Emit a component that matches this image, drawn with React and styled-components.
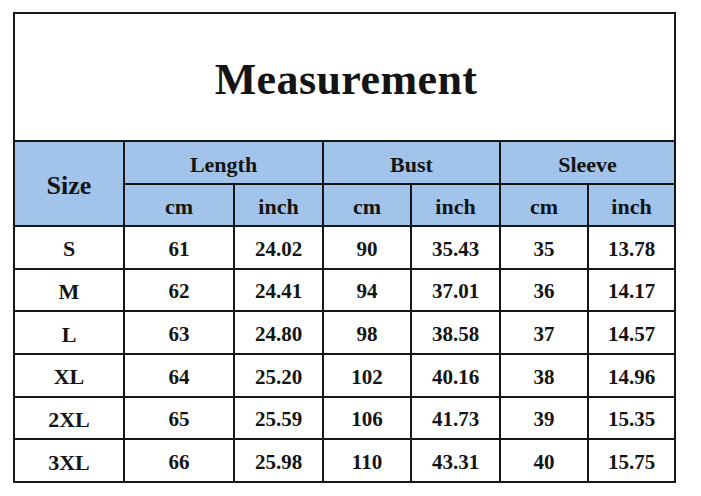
import React from 'react';
import styled, { createGlobalStyle } from 'styled-components';

const GlobalStyle = createGlobalStyle`
  body {
    margin: 0;
    background: #ffffff;
    font-family: "Liberation Serif", "Times New Roman", serif;
  }
`;

const rows = [
  ['S', '61', '24.02', '90', '35.43', '35', '13.78'],
  ['M', '62', '24.41', '94', '37.01', '36', '14.17'],
  ['L', '63', '24.80', '98', '38.58', '37', '14.57'],
  ['XL', '64', '25.20', '102', '40.16', '38', '14.96'],
  ['2XL', '65', '25.59', '106', '41.73', '39', '15.35'],
  ['3XL', '66', '25.98', '110', '43.31', '40', '15.75'],
];

const SizeChart = () => {
  return (
    <Page>
      <GlobalStyle />
      <Sheet>
        <Title>Measurement</Title>
        <HeadCell $rows={2} $big>Size</HeadCell>
        <HeadCell $cols={2}>Length</HeadCell>
        <HeadCell $cols={2}>Bust</HeadCell>
        <HeadCell $cols={2}>Sleeve</HeadCell>
        {['cm', 'inch', 'cm', 'inch', 'cm', 'inch'].map((u, i) => (
          <HeadCell key={i}>{u}</HeadCell>
        ))}
        {rows.map((row) =>
          row.map((v, i) => (
            <Cell key={row[0] + i} $label={i === 0}>
              {v}
            </Cell>
          ))
        )}
      </Sheet>
    </Page>
  );
};

const Page = styled.div`
  padding: 12px 0 0 13px;
`;

const Sheet = styled.div`
  display: grid;
  width: 663px;
  box-sizing: border-box;
  grid-template-columns: 108px 108px 87px 86px 87px 86px 85px;
  grid-template-rows: 126px 41px 40px repeat(6, 1fr);
  height: 471px;
  gap: 2px;
  padding: 2px;
  background: #161616;
  color: #141414;
`;

const Title = styled.div`
  grid-column: 1 / -1;
  background: #ffffff;
  display: flex;
  align-items: center;
  justify-content: center;
  padding: 4px 0 0 3px;
  font-size: 44px;
  font-weight: 700;
  letter-spacing: 0.4px;
`;

const HeadCell = styled.div`
  grid-column: span ${(p) => p.$cols || 1};
  grid-row: span ${(p) => p.$rows || 1};
  background: #a2c4ea;
  display: flex;
  align-items: center;
  justify-content: center;
  font-size: ${(p) => (p.$big ? '26px' : '22px')};
  font-weight: 700;
  padding-top: 4px;
`;

const Cell = styled.div`
  background: #ffffff;
  display: flex;
  align-items: center;
  justify-content: center;
  font-size: ${(p) => (p.$label ? '22px' : '21px')};
  font-weight: 700;
  padding-top: 4px;
`;

export default SizeChart;
